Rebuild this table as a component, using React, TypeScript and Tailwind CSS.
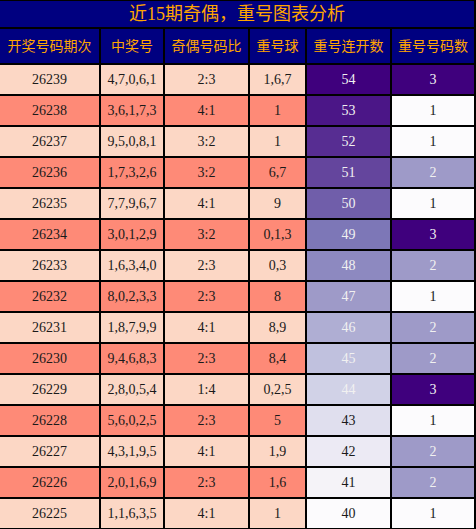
import React from "react";

const rows: [string, string, string, string, number, number][] = [
  ["26239", "4,7,0,6,1", "2:3", "1,6,7", 54, 3],
  ["26238", "3,6,1,7,3", "4:1", "1", 53, 1],
  ["26237", "9,5,0,8,1", "3:2", "1", 52, 1],
  ["26236", "1,7,3,2,6", "3:2", "6,7", 51, 2],
  ["26235", "7,7,9,6,7", "4:1", "9", 50, 1],
  ["26234", "3,0,1,2,9", "3:2", "0,1,3", 49, 3],
  ["26233", "1,6,3,4,0", "2:3", "0,3", 48, 2],
  ["26232", "8,0,2,3,3", "2:3", "8", 47, 1],
  ["26231", "1,8,7,9,9", "4:1", "8,9", 46, 2],
  ["26230", "9,4,6,8,3", "2:3", "8,4", 45, 2],
  ["26229", "2,8,0,5,4", "1:4", "0,2,5", 44, 3],
  ["26228", "5,6,0,2,5", "2:3", "5", 43, 1],
  ["26227", "4,3,1,9,5", "4:1", "1,9", 42, 2],
  ["26226", "2,0,1,6,9", "2:3", "1,6", 41, 2],
  ["26225", "1,1,6,3,5", "4:1", "1", 40, 1],
];

const streakBg: Record<number, string> = {
  54: "#3f007d",
  53: "#4b1687",
  52: "#572d92",
  51: "#64459d",
  50: "#705eaa",
  49: "#7d77b7",
  48: "#8d89c0",
  47: "#9e9ac8",
  46: "#afaed3",
  45: "#c0c1de",
  44: "#d1d2e7",
  43: "#e0dfee",
  42: "#eceaf4",
  41: "#f5f3f8",
  40: "#fcfbfd",
};

const countBg: Record<number, string> = {
  3: "#3f007d",
  2: "#9e9ac8",
  1: "#fcfbfd",
};

const headers = ["开奖号码期次", "中奖号", "奇偶号码比", "重号球", "重号连开数", "重号号码数"];

export default function App() {
  return (
    <div
      className="w-[476px] h-[529px] overflow-hidden bg-black"
      style={{ fontFamily: '"Liberation Serif", "Noto Sans CJK SC", serif' }}
    >
      <div className="grid grid-cols-[99px_62px_83px_55px_83px_82px] gap-[2px] pt-[1px] pr-[2px]">
        <div className="col-span-6 h-[26px] bg-[#000080] text-[#ffa500] text-[18px] flex items-center justify-center leading-none">
          近15期奇偶，重号图表分析
        </div>
        {headers.map((h) => (
          <div
            key={h}
            className="h-[34px] bg-[#000080] text-[#ffa500] text-[14px] flex items-center justify-center"
          >
            {h}
          </div>
        ))}
        {rows.map((r, i) => {
          const base = i % 2 === 0 ? "bg-[#fcd7c5]" : "bg-[#fe8a77]";
          const cell = `h-[29px] flex items-center justify-center text-[14px] text-[#1a1a1a] ${base}`;
          return (
            <React.Fragment key={r[0]}>
              <div className={cell}>{r[0]}</div>
              <div className={cell}>{r[1]}</div>
              <div className={cell}>{r[2]}</div>
              <div className={cell}>{r[3]}</div>
              <div
                className="h-[29px] flex items-center justify-center text-[14px]"
                style={{ backgroundColor: streakBg[r[4]], color: r[4] >= 44 ? "#f1f1f1" : "#1a1a1a" }}
              >
                {r[4]}
              </div>
              <div
                className="h-[29px] flex items-center justify-center text-[14px]"
                style={{ backgroundColor: countBg[r[5]], color: r[5] >= 2 ? "#f1f1f1" : "#1a1a1a" }}
              >
                {r[5]}
              </div>
            </React.Fragment>
          );
        })}
      </div>
    </div>
  );
}
